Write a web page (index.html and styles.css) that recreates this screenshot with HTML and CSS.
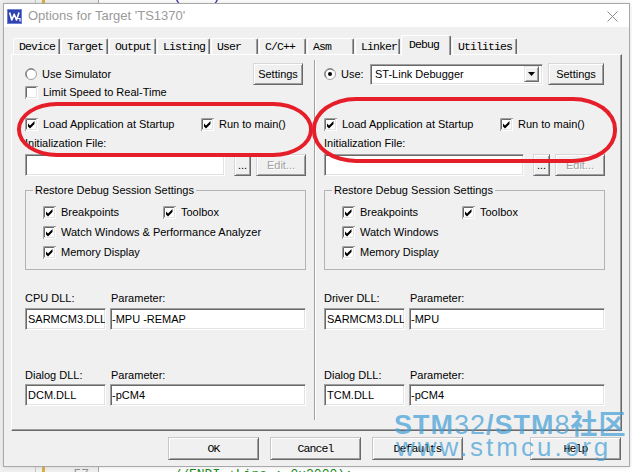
FILE: index.html
```html
<!DOCTYPE html>
<html>
<head>
<meta charset="utf-8">
<link rel="stylesheet" href="styles.css">
</head>
<body>
<svg class="defs" width="0" height="0" aria-hidden="true">
  <defs>
    <symbol id="cbox" viewBox="0 0 13 13">
      <rect width="13" height="13" fill="#fff"/>
      <path d="M0.5 13V0.5H13" fill="none" stroke="#a0a0a0"/>
      <path d="M1.5 12V1.5H12" fill="none" stroke="#696969"/>
      <path d="M1 11.5H11.5V1" fill="none" stroke="#e3e3e3"/>
    </symbol>
    <symbol id="cbon" viewBox="0 0 13 13">
      <use href="#cbox"/>
      <path d="M3 5.5l2 2 4.5-4.5v3L5 10.5l-2-2z" fill="#000"/>
    </symbol>
    <symbol id="rad" viewBox="0 0 12 12">
      <circle cx="6" cy="6" r="5.5" fill="#fff" stroke="#a0a0a0"/>
      <path d="M2.5 9.5A4.6 4.6 0 0 1 9.5 2.5" fill="none" stroke="#696969"/>
    </symbol>
    <symbol id="radon" viewBox="0 0 12 12">
      <use href="#rad"/>
      <circle cx="6" cy="6" r="2" fill="#000"/>
    </symbol>
  </defs>
</svg>

<div class="editor">
  <div class="e-margin"></div>
  <div class="e-gap"></div>
  <div class="e-bp"></div>
  <div class="e-gutter">
    <div class="e-line first">36</div>
    <div class="e-line last">57</div>
  </div>
  <div class="e-code">
    <div class="e-line first kw">int main(void)</div>
    <div class="e-line last cm">        //ENDI +Line ; 0x2000);</div>
  </div>
</div>

<div class="dialog">
  <div class="titlebar">
    <svg class="app-icon" width="15" height="15" viewBox="0 0 15 15">
      <rect x="0" y="0" width="15" height="15" rx="1.5" fill="#2f43b0"/>
      <rect x="0.5" y="0.5" width="14" height="14" rx="1" fill="none" stroke="#6f80d8"/>
      <path d="M2.6 3.5L4.8 11L7.2 5.2L9.5 11L12 3.5" fill="none" stroke="#fff" stroke-width="1.6" stroke-linejoin="round"/>
      <path d="M10 9.5h3v3" fill="none" stroke="#fff" stroke-width="1.2"/>
    </svg>
    <span class="title">Options for Target 'TS1370'</span>
    <svg class="close" width="11" height="11" viewBox="0 0 11 11">
      <path d="M0.5 0.5L10.5 10.5M10.5 0.5L0.5 10.5" stroke="#8a8a8a" stroke-width="1"/>
    </svg>
  </div>

  <div class="body">
    <div class="tabs">
      <div class="tab">Device</div>
      <div class="tab">Target</div>
      <div class="tab">Output</div>
      <div class="tab">Listing</div>
      <div class="tab">User</div>
      <div class="tab">C/C++</div>
      <div class="tab">Asm</div>
      <div class="tab narrow">Linker</div>
      <div class="tab active">Debug</div>
      <div class="tab">Utilities</div>
    </div>

    <div class="panel">
      <div class="col left">
        <div class="r1">
          <label class="opt"><svg class="rb" width="12" height="12"><use href="#rad"/></svg>Use Simulator</label>
          <button class="btn settings">Settings</button>
        </div>
        <div class="r2">
          <label class="opt"><svg class="cb" width="13" height="13"><use href="#cbox"/></svg>Limit Speed to Real-Time</label>
        </div>
        <div class="r3">
          <label class="opt"><svg class="cb" width="13" height="13"><use href="#cbon"/></svg>Load Application at Startup</label>
          <label class="opt"><svg class="cb" width="13" height="13"><use href="#cbon"/></svg>Run to main()</label>
        </div>
        <div class="r4">Initialization File:</div>
        <div class="r5">
          <div class="field wide"></div>
          <button class="btn dots">...</button>
          <button class="btn edit" disabled>Edit...</button>
        </div>
        <fieldset class="group">
          <legend>Restore Debug Session Settings</legend>
          <div class="g-body">
            <div class="g-row">
              <label class="opt first"><svg class="cb" width="13" height="13"><use href="#cbon"/></svg>Breakpoints</label>
              <label class="opt"><svg class="cb" width="13" height="13"><use href="#cbon"/></svg>Toolbox</label>
            </div>
            <div class="g-row">
              <label class="opt"><svg class="cb" width="13" height="13"><use href="#cbon"/></svg>Watch Windows &amp; Performance Analyzer</label>
            </div>
            <div class="g-row">
              <label class="opt"><svg class="cb" width="13" height="13"><use href="#cbon"/></svg>Memory Display</label>
            </div>
          </div>
        </fieldset>
        <div class="lbl-row"><span>CPU DLL:</span><span class="param">Parameter:</span></div>
        <div class="in-row"><div class="field">SARMCM3.DLL</div><div class="field p">-MPU -REMAP</div></div>
        <div class="lbl-row second"><span>Dialog DLL:</span><span class="param">Parameter:</span></div>
        <div class="in-row second"><div class="field">DCM.DLL</div><div class="field p">-pCM4</div></div>
      </div>

      <div class="divider"></div>

      <div class="col right">
        <div class="r1 use">
          <label class="opt use-opt"><svg class="rb" width="12" height="12"><use href="#radon"/></svg>Use:</label>
          <div class="combo">
            <span class="combo-text">ST-Link Debugger</span>
            <span class="combo-btn"><svg width="7" height="4" viewBox="0 0 7 4"><path d="M0 0h7L3.5 4z" fill="#000"/></svg></span>
          </div>
          <button class="btn settings wide-s">Settings</button>
        </div>
        <div class="r2"></div>
        <div class="r3">
          <label class="opt"><svg class="cb" width="13" height="13"><use href="#cbon"/></svg>Load Application at Startup</label>
          <label class="opt"><svg class="cb" width="13" height="13"><use href="#cbon"/></svg>Run to main()</label>
        </div>
        <div class="r4">Initialization File:</div>
        <div class="r5">
          <div class="field wide"></div>
          <button class="btn dots">...</button>
          <button class="btn edit" disabled>Edit...</button>
        </div>
        <fieldset class="group">
          <legend>Restore Debug Session Settings</legend>
          <div class="g-body">
            <div class="g-row">
              <label class="opt first"><svg class="cb" width="13" height="13"><use href="#cbon"/></svg>Breakpoints</label>
              <label class="opt"><svg class="cb" width="13" height="13"><use href="#cbon"/></svg>Toolbox</label>
            </div>
            <div class="g-row">
              <label class="opt"><svg class="cb" width="13" height="13"><use href="#cbon"/></svg>Watch Windows</label>
            </div>
            <div class="g-row">
              <label class="opt"><svg class="cb" width="13" height="13"><use href="#cbon"/></svg>Memory Display</label>
            </div>
          </div>
        </fieldset>
        <div class="lbl-row"><span>Driver DLL:</span><span class="param">Parameter:</span></div>
        <div class="in-row"><div class="field">SARMCM3.DLL</div><div class="field p">-MPU</div></div>
        <div class="lbl-row second"><span>Dialog DLL:</span><span class="param">Parameter:</span></div>
        <div class="in-row second"><div class="field">TCM.DLL</div><div class="field p">-pCM4</div></div>
      </div>
    </div>

    <div class="buttons">
      <button class="btn cmd">OK</button>
      <button class="btn cmd">Cancel</button>
      <button class="btn cmd defaults">Defaults</button>
      <button class="btn cmd">Help</button>
    </div>
  </div>
</div>

<div class="ring ring-left"></div>
<div class="ring ring-right"></div>

<div class="wm">
  <div class="wm1">STM<span class="thin">32</span>/STM<span class="thin">8</span>社区</div>
  <div class="wm2">www.stmcu.org</div>
</div>
</body>
</html>
```

FILE: styles.css
```css
* { box-sizing: border-box; }
html, body { margin: 0; padding: 0; }
body {
  width: 632px;
  height: 472px;
  position: relative;
  overflow: hidden;
  background: #fff;
  font-family: "Liberation Sans", Arial, sans-serif;
  font-size: 11px;
  color: #000;
}
.defs { position: absolute; width: 0; height: 0; overflow: hidden; }

/* editor behind the dialog */
.editor { display: flex; height: 472px; }
.e-margin { width: 36px; background: #f0f0f0; border-right: 1px solid #c8c8c8; }
.e-gap { width: 6px; background: #f0f0f0; }
.e-bp { width: 3px; background: #d8b048; }
.e-gutter {
  width: 54px;
  background: #f0f0f0;
  border-right: 1px solid #a8a8a8;
  display: flex;
  flex-direction: column;
  justify-content: space-between;
  text-align: right;
  padding-right: 9px;
  font: 13px/16px "Liberation Mono", monospace;
  color: #909090;
}
.e-code {
  flex: 1;
  display: flex;
  flex-direction: column;
  justify-content: space-between;
  padding-left: 12px;
  font: 13px/16px "Liberation Mono", monospace;
  white-space: pre;
}
.e-line.first { margin-top: -11px; }
.e-line.last { margin-bottom: -11px; }
.kw { color: #1a1aa6; }
.cm { color: #1a8a1a; }

/* dialog window */
.dialog {
  position: absolute;
  left: 3px;
  top: 3px;
  width: 627px;
  height: 464px;
  border: 1px solid #a9a9a9;
  background: #f0f0f0;
  box-shadow: 0 0 5px rgba(0, 0, 0, 0.12);
}
.titlebar {
  height: 23px;
  background: #fff;
  display: flex;
  align-items: center;
  padding-left: 3px;
}
.app-icon { display: block; margin-top: 2px; }
.title { margin-left: 6px; font-size: 13px; color: #9a9a9a; }
.close { margin-left: auto; margin-right: 11px; display: block; margin-top: 2px; }

.body { padding: 8px 0 0 7px; }

/* tabs */
.tabs {
  display: flex;
  align-items: flex-end;
  height: 19px;
  padding-left: 2px;
  font: 11.5px "Liberation Mono", monospace;
  letter-spacing: -0.9px;
}
.tab {
  height: 16px;
  min-width: 47px;
  padding: 0 4px 0 5px;
  margin-right: 1px;
  border-top: 1px solid #fff;
  border-left: 1px solid #fff;
  border-right: 1px solid #696969;
  box-shadow: inset -1px 0 #a0a0a0;
  border-radius: 2px 2px 0 0;
  line-height: 15px;
  white-space: nowrap;
}
.tab.narrow { min-width: 45px; width: 45px; }
.tab.active {
  height: 20px;
  width: 50px;
  padding-left: 7px;
  margin-bottom: -1px;
  position: relative;
  z-index: 1;
  background: #f0f0f0;
  line-height: 17px;
}

/* panel */
.panel {
  width: 611px;
  height: 377px;
  border: 1px solid;
  border-color: #fff #696969 #696969 #fff;
  box-shadow: inset -1px -1px #a0a0a0;
  display: grid;
  grid-template-columns: 281px 18px 281px;
  align-items: start;
  padding: 8px 0 0 13px;
}
.divider {
  width: 2px;
  height: 360px;
  margin: -3px 0 0 8px;
  border-left: 1px solid #a0a0a0;
  border-right: 1px solid #fff;
}
.col { display: flex; flex-direction: column; }

.opt { display: flex; align-items: center; gap: 5px; white-space: nowrap; }
.opt svg { display: block; flex: none; }

.r1 { height: 22px; display: flex; align-items: center; justify-content: space-between; }
.r1.use { justify-content: flex-start; }
.r2 { height: 14px; display: flex; align-items: center; }
.r3 {
  height: 16px;
  margin-top: 17px;
  display: grid;
  grid-template-columns: 176px auto;
  align-items: center;
}
.r4 { height: 22px; display: flex; align-items: center; }
.r5 { height: 22px; display: flex; }

/* controls */
.btn {
  font: 11px "Liberation Sans", Arial, sans-serif;
  color: #000;
  background: #f0f0f0;
  border: 1px solid;
  border-color: #d8d8d8 #696969 #696969 #d8d8d8;
  box-shadow: inset 1px 1px #fff, inset -1px -1px #a0a0a0;
  padding: 0;
  margin: 0;
}
.btn:disabled { color: #a0a0a0; text-shadow: 1px 1px #fff; }
.settings { width: 50px; height: 22px; margin-right: 3px; }
.settings.wide-s { width: 56px; margin-left: 5px; margin-right: 0; }
.dots { width: 17px; height: 22px; margin-left: 9px; }
.edit { width: 50px; height: 22px; margin-left: 5px; }

.field {
  height: 22px;
  background: #fff;
  border: 1px solid;
  border-color: #a0a0a0 #fff #fff #a0a0a0;
  box-shadow: inset 1px 1px #696969, inset -1px -1px #e3e3e3;
  padding: 0 0 0 2px;
  line-height: 20px;
  white-space: nowrap;
  overflow: hidden;
}
.field.wide { width: 200px; }
.field.p { padding-left: 1px; }

.use-opt { width: 46px; }
.combo {
  width: 173px;
  height: 21px;
  display: flex;
  align-items: center;
  background: #fff;
  border: 1px solid;
  border-color: #a0a0a0 #fff #fff #a0a0a0;
  box-shadow: inset 1px 1px #696969, inset -1px -1px #e3e3e3;
  padding: 2px 3px 2px 2px;
}
.combo-text { flex: 1; padding-left: 2px; font-size: 11px; }
.combo-btn {
  width: 15px;
  height: 16px;
  display: flex;
  align-items: center;
  justify-content: center;
  background: #f0f0f0;
  border: 1px solid;
  border-color: #e3e3e3 #696969 #696969 #e3e3e3;
  box-shadow: inset 1px 1px #fff, inset -1px -1px #a0a0a0;
}
.combo-btn svg { display: block; }

/* group box */
.group {
  margin: 7px 0 0;
  padding: 0 0 8px;
  border: 1px solid #b4b4b4;
  min-width: 0;
}
.group legend { margin-left: 7px; padding: 0 2px; line-height: 14px; }
.g-body { padding: 6px 0 0 17px; display: flex; flex-direction: column; gap: 2px; }
.g-row { height: 18px; display: flex; align-items: center; }
.g-row .first { width: 120px; }

/* DLL rows */
.lbl-row {
  margin-top: 20px;
  height: 16px;
  display: grid;
  grid-template-columns: 81px 196px;
  column-gap: 4px;
  align-items: center;
}
.lbl-row.second { margin-top: 37px; }
.param { padding-left: 1px; }
.in-row {
  margin-top: 2px;
  display: grid;
  grid-template-columns: 81px 196px;
  column-gap: 4px;
}
.in-row.second { margin-top: 1px; }

/* dialog buttons */
.buttons {
  display: flex;
  justify-content: flex-end;
  padding-right: 8px;
  margin-top: 6px;
}
.cmd {
  width: 91px;
  height: 23px;
  margin-left: 11px;
  font: 11.5px "Liberation Mono", monospace;
  letter-spacing: -0.9px;
  border-color: #c8c8c8 #696969 #696969 #c8c8c8;
}
.cmd.defaults { margin-right: 56px; }

/* red annotation rings */
.ring {
  position: absolute;
  border: 4px solid #e51e2a;
  pointer-events: none;
}
.ring-left { left: 17px; top: 102px; width: 296px; height: 55px; border-radius: 40px / 27px; }
.ring-right { left: 312px; top: 97px; width: 305px; height: 66px; border-radius: 44px / 32px; }

/* watermark */
.wm {
  position: absolute;
  left: 394px;
  top: 412px;
  color: rgba(70, 160, 215, 0.72);
  pointer-events: none;
}
.wm1 {
  font: bold 27px/27px "Liberation Sans", "Noto Sans CJK SC", sans-serif;
  letter-spacing: 1px;
  white-space: nowrap;
}
.wm1 .thin { font-weight: normal; }
.wm2 {
  margin-top: -5px;
  padding-left: 2px;
  font: 26px/26px "Liberation Sans", sans-serif;
  letter-spacing: 3px;
  white-space: nowrap;
}
```
